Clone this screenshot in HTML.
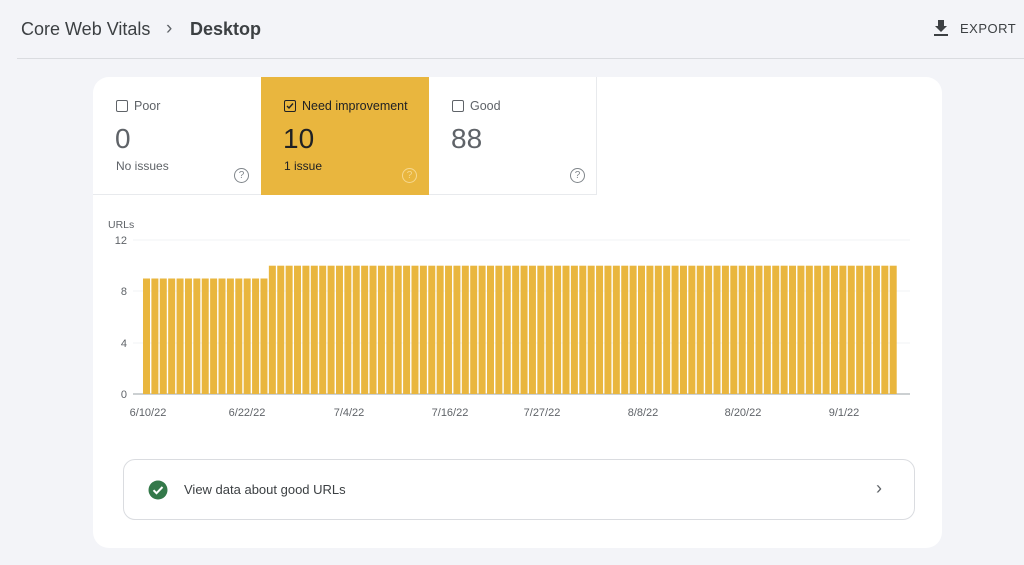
<!DOCTYPE html>
<html><head><meta charset="utf-8"><style>
*{margin:0;padding:0;box-sizing:border-box}
body{width:1024px;height:565px;background:#f3f4f8;font-family:"Liberation Sans",sans-serif;position:relative;overflow:hidden;color:#202124}
.a{position:absolute}
.card{left:93px;top:77px;width:849px;height:471px;background:#fff;border-radius:16px;overflow:hidden}
.tab{top:0;width:168px;height:118px}
.cb{position:absolute;left:23px;top:23px;width:12px;height:12px;border:1.5px solid #5f6368;border-radius:2px}
.lbl{position:absolute;left:41px;top:22px;font-size:12.5px;color:#5f6368}
.num{position:absolute;left:22px;top:46px;font-size:28px;color:#5f6368}
.sub{position:absolute;left:23px;top:82px;font-size:12px;color:#5f6368}
.q{position:absolute;left:141px;top:91px;width:15px;height:15px;border:1.3px solid #80868b;border-radius:50%;font-size:10px;line-height:13px;text-align:center;color:#80868b}
</style></head><body>
<div class="a" style="left:21px;top:19px;font-size:18px;color:#3c4043">Core Web Vitals</div>
<div class="a" style="left:166px;top:18px;font-size:19px;color:#5f6368">›</div>
<div class="a" style="left:190px;top:19px;font-size:18px;color:#3c4043;font-weight:bold">Desktop</div>
<svg class="a" style="left:933px;top:19px" width="16" height="18" viewBox="0 0 16 18"><path d="M5 1h6v6h3l-6 6-6-6h3z" fill="#3c4043"/><rect x="1" y="15" width="14" height="2" fill="#3c4043"/></svg>
<div class="a" style="left:960px;top:21px;font-size:13px;color:#3c4043;letter-spacing:.5px">EXPORT</div>
<div class="a" style="left:17px;top:58px;width:1007px;height:1px;background:#dadce0"></div>
<div class="a card">
 <div class="a tab" style="left:0;border-bottom:1px solid #e8eaed">
  <div class="cb"></div><div class="lbl">Poor</div><div class="num">0</div><div class="sub">No issues</div><div class="q">?</div></div>
 <div class="a tab" style="left:168px;background:#e9b63e">
  <div class="cb" style="border-color:#202124"><svg width="10" height="10" style="position:absolute;left:0;top:0" viewBox="0 0 10 10"><path d="M2 5l2 2 4-4.5" stroke="#202124" stroke-width="1.4" fill="none"/></svg></div><div class="lbl" style="color:#202124">Need improvement</div><div class="num" style="color:#202124">10</div><div class="sub" style="color:#202124">1 issue</div><div class="q" style="border-color:#f6d88f;color:#f6d88f">?</div></div>
 <div class="a tab" style="left:336px;border-right:1px solid #e8eaed;border-bottom:1px solid #e8eaed;width:168px">
  <div class="cb"></div><div class="lbl">Good</div><div class="num">88</div><div class="q">?</div></div>
 <svg class="a" style="left:0;top:0" width="849" height="471" id="ch"></svg>
 <div class="a" style="left:30px;top:382px;width:792px;height:61px;border:1px solid #dadce0;border-radius:12px">
  <svg class="a" style="left:24px;top:20px" width="20" height="20" viewBox="0 0 20 20"><circle cx="10" cy="10" r="9.5" fill="#34794a"/><path d="M5.5 10.2l3 3 6-6.2" stroke="#fff" stroke-width="2" fill="none"/></svg>
  <div class="a" style="left:60px;top:22px;font-size:13px;color:#3c4043">View data about good URLs</div>
  <div class="a" style="left:752px;top:18px;font-size:18px;color:#5f6368">›</div>
 </div>
</div>
<script>
var s='<text x="15" y="151" font-size="10.5" fill="#5f6368" font-family="Liberation Sans">URLs</text>';
var g=[[12,163],[8,214],[4,266],[0,317]];
g.forEach(function(t){s+='<line x1="40" x2="817" y1="'+t[1]+'" y2="'+t[1]+'" stroke="'+(t[0]?'#f1f3f4':'#9aa0a6')+'"/><text x="34" y="'+(t[1]+4)+'" text-anchor="end" font-size="11" fill="#5f6368" font-family="Liberation Sans">'+t[0]+'</text>';});
for(var i=0;i<90;i++){var x=50+i*8.39,v=i<15?9:10,h=v*12.83;s+='<rect x="'+x.toFixed(2)+'" y="'+(317-h).toFixed(1)+'" width="7" height="'+h.toFixed(1)+'" fill="#e9b63e"/>';}
[["6/10/22",55],["6/22/22",154],["7/4/22",256],["7/16/22",357],["7/27/22",449],["8/8/22",550],["8/20/22",650],["9/1/22",751]].forEach(function(l){s+='<text x="'+l[1]+'" y="339" text-anchor="middle" font-size="11" fill="#5f6368" font-family="Liberation Sans">'+l[0]+'</text>';});
document.getElementById('ch').innerHTML=s;
</script>
</body></html>
